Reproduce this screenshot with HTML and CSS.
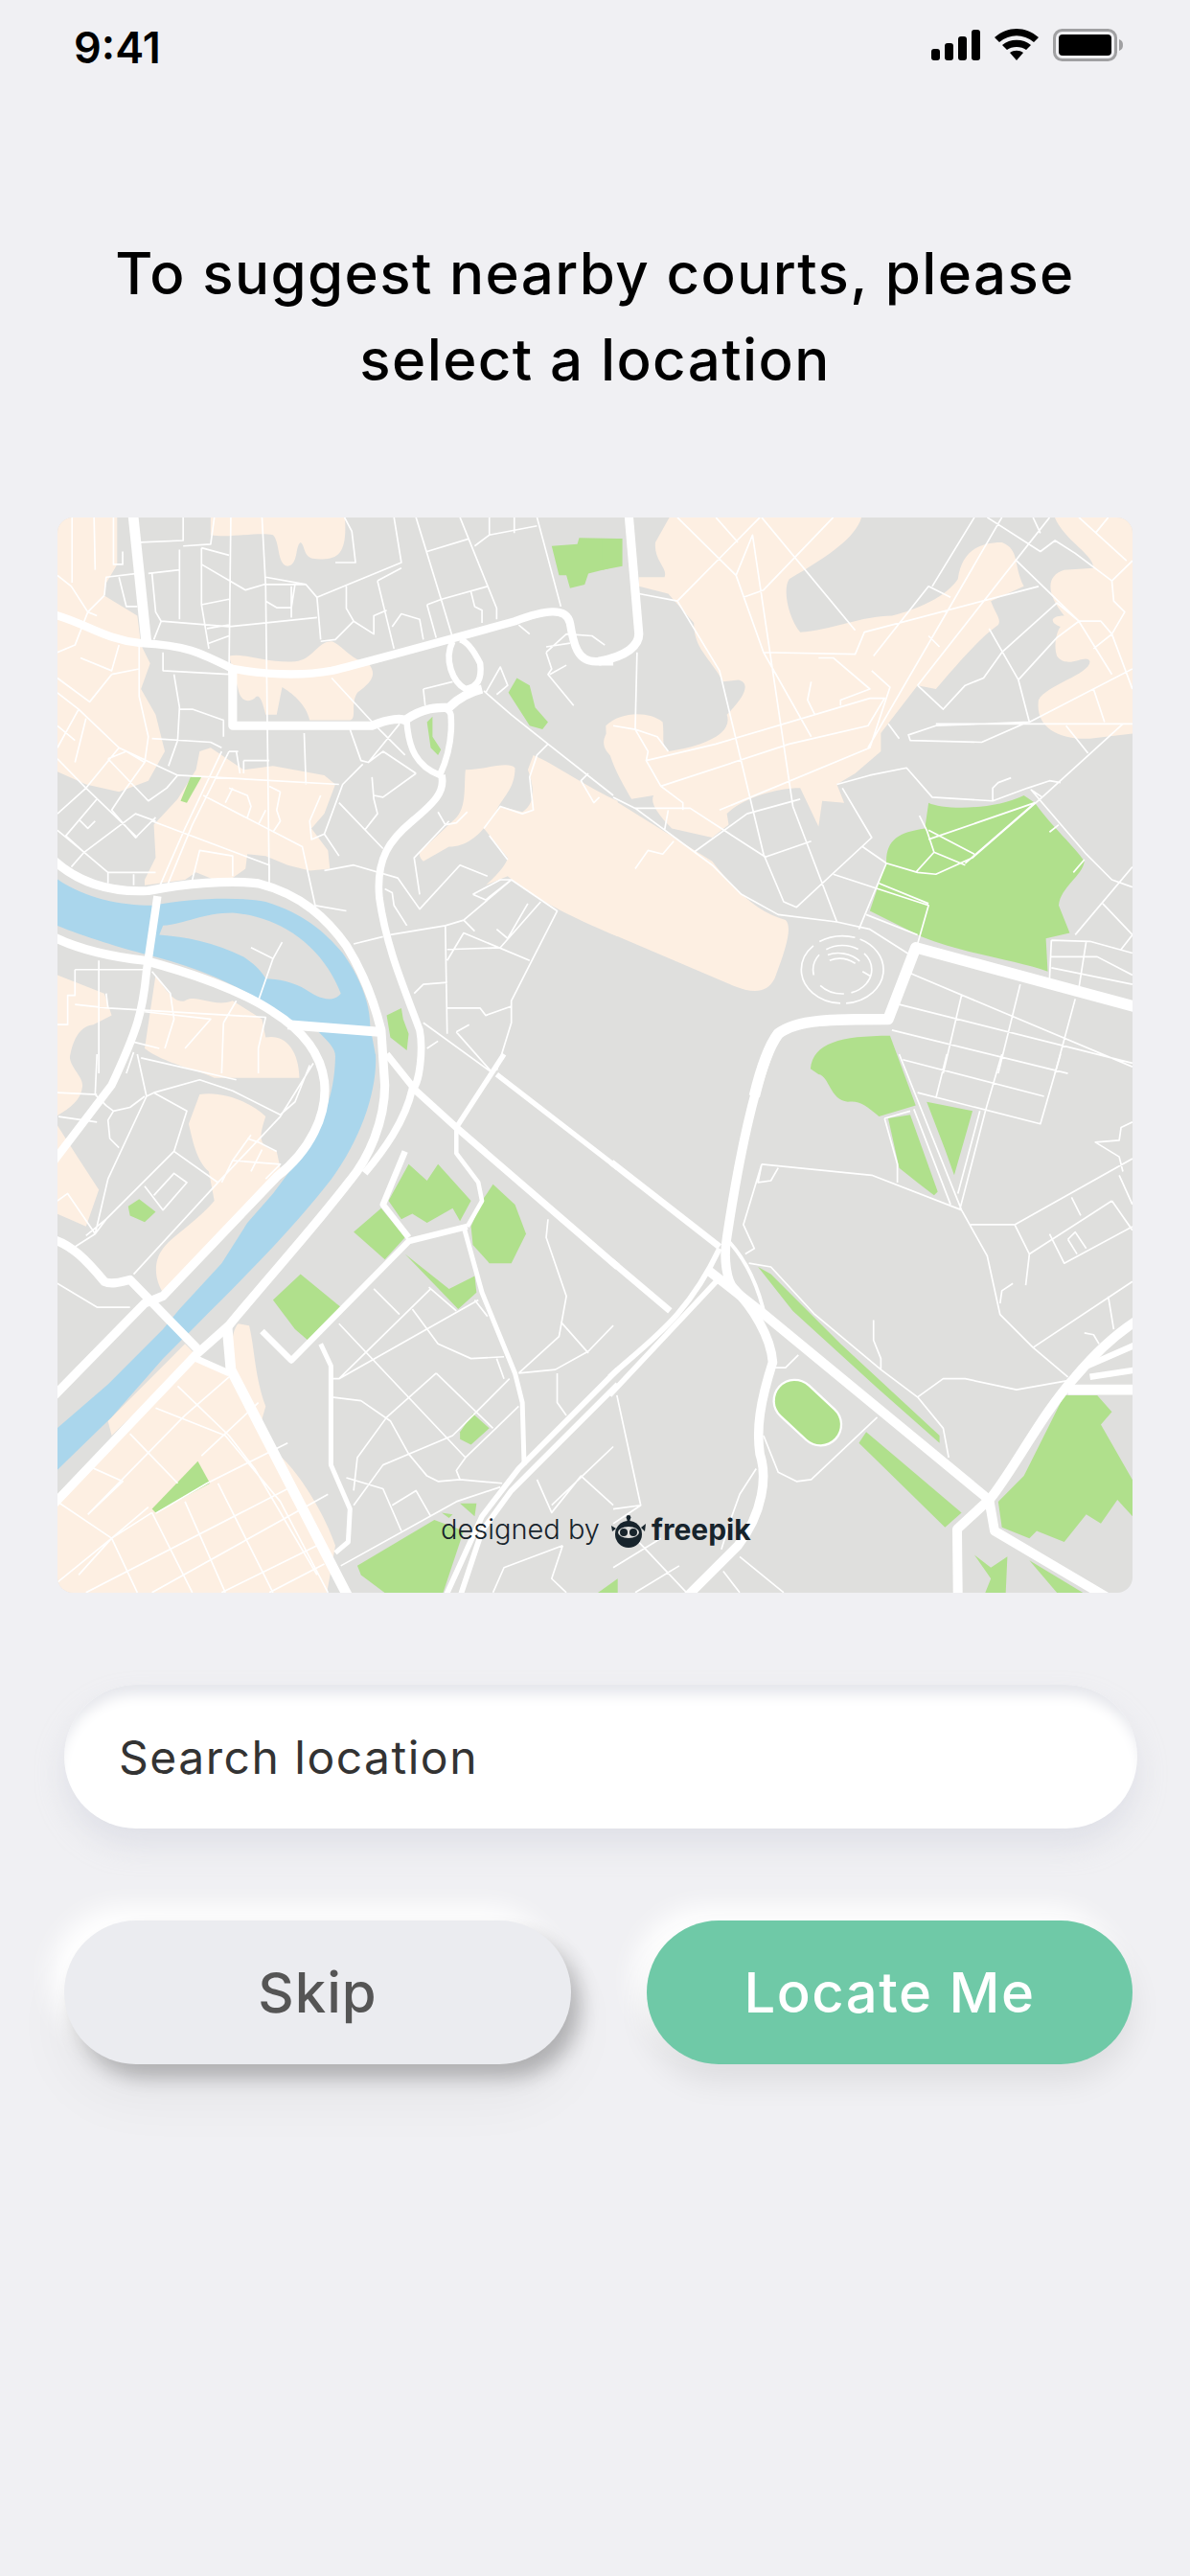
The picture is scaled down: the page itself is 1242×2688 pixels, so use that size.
FILE: index.html
```html
<!DOCTYPE html>
<html lang="en">
<head>
    <meta charset="UTF-8">
    <meta name="viewport" content="width=device-width, initial-scale=1.0">
    <title>Select Location</title>
    <link rel="stylesheet" href="styles.css">
</head>
<body>

    <div class="status-bar">
        <span class="status-time">9:41</span>
        <svg class="status-icons" viewBox="970 28 204 38" width="204" height="38">
            <rect x="972" y="51" width="9" height="12" rx="3"/>
            <rect x="986" y="45" width="9" height="18" rx="3"/>
            <rect x="1000" y="38" width="9" height="25" rx="3"/>
            <rect x="1014" y="31" width="9" height="32" rx="3"/>
            <path d="M1038 39C1052 27 1070 27 1084 39L1079 44C1068 35 1054 35 1043 44Z"/>
            <path d="M1046 47C1054 40 1068 40 1076 47L1071 52C1066 48 1056 48 1051 52Z"/>
            <path d="M1054 55C1058 52 1064 52 1068 55L1061 63Z"/>
            <rect class="battery-case" x="1100.5" y="31.5" width="64" height="31" rx="8"/>
            <rect x="1105" y="36" width="55" height="22" rx="4"/>
            <path class="battery-cap" d="M1168 41C1171 42 1172 44 1172 47C1172 50 1171 52 1168 53Z"/>
        </svg>
    </div>

    <h1 class="heading">To suggest nearby courts, please<br>select a location</h1>

    <div class="map">
        <svg class="map-art" viewBox="60 540 1122 1122" width="1122" height="1122">
            <rect x="60" y="540" width="1122" height="1122" fill="#dfdfdd"/>

            <!-- built up areas -->
            <g class="land">
                <path transform="translate(40 520) scale(.3827)" d="M40 40H215V180L180 240V265L270 320 280 400 305 450 280 520 320 590 345 690 300 770 220 800 130 780 40 740Z"/>
                <path transform="translate(40 520) scale(.3827)" d="M470 40V100C520 110 600 90 640 100 660 120 650 180 680 185 710 180 700 130 715 120 730 130 720 165 760 165 820 170 845 150 835 40Z"/>
                <path transform="translate(40 520) scale(.3827)" d="M520 430C560 420 620 450 700 445 750 440 760 390 800 390 830 400 850 440 900 450 925 480 910 500 870 530 850 560 870 600 850 605H740C730 560 690 530 665 515L650 590H620C610 545 600 530 590 545 570 560 550 550 545 520Z"/>
                <path transform="translate(40 520) scale(.3827)" d="M440 690 470 680 500 700 560 740 640 730 780 755 810 780 780 860 745 900 790 960 795 1010 740 1015 680 1000 620 975 570 970 565 1010 530 1035 480 1040 430 1020 400 1040 290 1055V1040L320 980 315 890 380 820 430 740Z"/>
                <path transform="translate(40 520) scale(.3827)" d="M40 1295 180 1350 200 1410 150 1435C110 1440 85 1480 80 1580H40Z"/>
                <path transform="translate(40 520) scale(.3827)" d="M320 1300C340 1330 370 1380 400 1370 430 1350 480 1390 530 1370L610 1420 620 1470C670 1460 710 1500 712 1580H480C440 1560 340 1540 290 1500Z"/>
                <path transform="translate(40 520) scale(.3827)" d="M1350 700C1400 720 1500 790 1580 825V1195C1450 1140 1350 1090 1280 1030L1220 1055C1260 1020 1280 990 1280 980L1215 900 1260 840 1320 855C1360 830 1350 780 1335 740Z"/>
                <path transform="translate(40 520) scale(.3827)" d="M1165 740C1220 740 1280 715 1300 735 1300 790 1270 810 1250 850 1220 900 1180 950 1120 950L1050 990C1040 980 1035 970 1045 960L1130 880C1170 850 1160 790 1165 740Z"/>
                <path transform="translate(40 520) scale(.3827)" d="M1580 615C1550 630 1530 660 1550 690L1580 725Z"/>
                <path transform="translate(640 520) scale(.3827)" d="M115 120 160 40H680C670 100 600 150 480 220 460 250 480 330 510 365 590 360 680 320 760 320 800 310 900 280 940 220 950 150 990 120 1060 120 1110 140 1090 180 1120 240L1030 280C1040 310 1060 330 1050 345 1000 380 940 450 880 520L830 510 730 640V690L660 750 610 780 630 830 570 825 560 895 510 790C440 790 350 820 310 860L315 890 270 925 160 900C120 860 100 830 110 810L50 820C10 750-20 700-20 620 20 580 100 580 135 610 140 650 130 680 150 690 220 680 330 650 310 590 370 530 370 500 340 495L300 500C260 430 220 410 220 340L150 260 70 240V215H140C150 190 110 170 115 120Z"/>
                <path transform="translate(640 520) scale(.3827)" d="M1200 40H1430V640L1300 655C1210 660 1150 620 1160 550 1180 510 1300 480 1300 445 1290 420 1240 470 1210 430 1200 400 1210 360 1220 350 1190 340 1190 320 1230 320 1180 260 1180 210 1230 195L1310 190C1310 150 1220 110 1200 40Z"/>
                <path transform="translate(640 520) scale(.3827)" d="M-10 815 270 990C340 1080 400 1130 470 1150 490 1170 470 1230 440 1310 420 1350 380 1350 330 1330L-10 1185Z"/>
                <path transform="translate(40 1100) scale(.3827)" d="M40 0H85C85 40 125 60 120 90 115 130 80 150 40 175Z"/>
                <path transform="translate(40 1100) scale(.3827)" d="M40 175 100 270 165 370 130 470 40 430Z"/>
                <path transform="translate(40 1100) scale(.3827)" d="M440 110C500 100 580 130 620 170 600 230 600 250 650 265L660 310 610 370 480 530 340 650C320 620 310 570 340 530 360 500 440 450 480 400L465 320C430 290 420 230 410 190Z"/>
                <path transform="translate(40 1100) scale(.3827)" d="M40 1235 430 820 520 870 510 850C530 850 520 760 545 735L575 740C590 800 590 880 620 960L600 1030 640 1080C700 1120 780 1250 810 1340L785 1480H40Z"/>
                <path transform="translate(40 1100) scale(.3827)" d="M190 1000 400 790 430 820 200 1040Z"/>
            </g>

            <!-- river -->
            <g class="water">
                <path transform="translate(40 520) scale(.3827)" fill-rule="evenodd" d="M40 1030C120 1090 220 1110 310 1110 420 1090 540 1085 620 1100 720 1130 780 1180 830 1240 880 1310 905 1380 905 1440L920 1520H810C810 1500 790 1480 760 1450L680 1420C620 1370 480 1290 320 1250 220 1225 110 1190 40 1160ZM340 1165C400 1160 450 1130 530 1130 650 1140 770 1210 825 1350 800 1380 760 1360 730 1340 700 1320 650 1310 620 1310 610 1290 590 1270 560 1250 480 1210 400 1195 330 1190Z"/>
                <path transform="translate(40 1100) scale(.3827)" d="M920 0C925 100 880 230 800 340 700 470 560 610 430 740L340 830 200 990 40 1145V1030L190 900 340 750 385 695 500 570 570 460 640 380 700 300C790 190 810 80 810 0Z"/>
            </g>

            <!-- parks -->
            <g class="park">
                <path transform="translate(40 520) scale(.3827)" d="M1400 130 1470 125 1475 108 1580 110V185L1500 205 1490 235 1450 245 1440 210H1420Z"/>
                <path transform="translate(40 520) scale(.3827)" d="M1282 530 1305 490 1340 510 1355 570 1390 610 1375 630 1340 620Z"/>
                <path transform="translate(40 520) scale(.3827)" d="M1060 610 1075 595V650L1098 685 1090 700 1070 680Z"/>
                <path transform="translate(40 520) scale(.3827)" d="M388 825 415 760H445L405 830Z"/>
                <path transform="translate(40 520) scale(.3827)" d="M950 1410 990 1390 995 1420 1010 1460 1005 1505 960 1470Z"/>
                <path transform="translate(640 520) scale(.3827)" d="M860 830C900 850 1040 850 1120 810L1150 830C1200 900 1260 950 1285 990 1280 1030 1220 1060 1215 1110L1245 1185 1180 1200 1185 1290C1100 1260 950 1240 840 1195L700 1125 745 990C745 930 780 910 850 900Z"/>
                <path transform="translate(640 520) scale(.3827)" d="M-30 110H25V185L-30 195Z"/>
                <path transform="translate(640 1100) scale(.3827)" d="M538 40C545-30 620-50 755-50L825 140 725 170C690 140 670 125 640 130 590 125 590 60 560 55Z"/>
                <path transform="translate(640 1100) scale(.3827)" d="M750 175 810 165 885 375 875 385 830 350 780 310Z"/>
                <path transform="translate(640 1100) scale(.3827)" d="M855 130 980 155 930 330 905 260Z"/>
                <path transform="translate(640 1100) scale(.3827)" d="M395 580 430 600 620 790 890 1040V1060L720 910 490 700Z"/>
                <path transform="translate(640 1100) scale(.3827)" d="M690 1030 950 1250 905 1290 670 1060Z"/>
                <path transform="translate(640 1100) scale(.3827)" d="M1230 930H1320L1360 975 1330 1010 1430 1185V1275L1375 1215 1330 1280 1290 1255 1230 1330 1155 1300 1135 1320 1060 1290 1050 1220 1120 1150Z"/>
                <path transform="translate(640 1100) scale(.3827)" d="M985 1365 1030 1400 1075 1370 1070 1480H1010L1030 1430Z"/>
                <path transform="translate(640 1100) scale(.3827)" d="M1135 1380 1300 1480H1220Z"/>
                <path transform="translate(40 1100) scale(.3827)" d="M245 415 275 395 320 430 290 458 250 440Z"/>
                <path transform="translate(40 1100) scale(.3827)" d="M955 400 1010 300 1060 345 1090 300 1180 400 1150 455 1130 420 1060 460 1020 435 990 450Z"/>
                <path transform="translate(40 1100) scale(.3827)" d="M860 485 935 420 1000 500 945 560Z"/>
                <path transform="translate(40 1100) scale(.3827)" d="M1180 470 1210 400 1240 355 1300 410 1330 490 1290 570H1230L1185 520Z"/>
                <path transform="translate(40 1100) scale(.3827)" d="M1000 545 1120 640 1190 605 1195 650 1145 695Z"/>
                <path transform="translate(40 1100) scale(.3827)" d="M640 670 715 600 825 690 735 780 700 750Z"/>
                <path transform="translate(40 1100) scale(.3827)" d="M1150 1030 1185 980 1230 1020 1180 1065 1150 1050Z"/>
                <path transform="translate(40 1100) scale(.3827)" d="M310 1240 435 1110 468 1170 320 1250Z"/>
                <path transform="translate(40 1100) scale(.3827)" d="M870 1395 1080 1270 1160 1300 1100 1480H960L880 1420Z"/>
                <path transform="translate(40 1100) scale(.3827)" d="M1100 1250 1130 1255 1120 1265ZM1150 1225H1195L1190 1260Z"/>
                <path transform="translate(40 1100) scale(.3827)" d="M1510 1480 1580 1430V1480Z"/>
            </g>

            <!-- running track -->
            <path class="track-edge" transform="translate(640 1100) scale(.3827)" d="M495 945 565 1010"/>
            <path class="track" transform="translate(640 1100) scale(.3827)" d="M495 945 565 1010"/>

            <!-- minor streets -->
            <g class="street">
                <path transform="translate(40 520) scale(.3827)" d="M92 52V230M152 52 155 195M205 52V180H230V145M180 265 185 215 270 205M220 215 240 295H270M278 120 395 115V52M395 130 470 125 480 52M385 140V330M300 205 385 195M310 205 320 310 335 335 315 385M335 335 520 350 760 325M445 135 520 155M445 180 565 250 615 235H730L760 270 770 385M445 135V290L465 410M445 290 520 275M460 355 520 345M465 395 520 375M525 52 520 480M610 52 620 240 630 1070M620 280 650 298H690L700 235M690 240V325M620 215 730 235M760 270 990 175 970 52M840 240V300L860 335 915 370V320L950 305M860 335 810 385 770 390M810 175H865L855 90 835 52M925 225 990 190M925 225 970 410M1030 52 1100 280 1130 380M1060 145 1175 110M1150 52 1250 300V330M1190 130 1230 100 1360 75M1230 52V100M1298 52V95M1360 52 1425 295M1060 290 1100 275 1225 240M1060 290 1085 380M1180 255 1190 295 1210 305V340M965 350 990 315 1040 330 1050 385"/>
                <path transform="translate(40 520) scale(.3827)" d="M340 420V470L520 480M370 480 385 570 380 660 355 730M385 575H420L505 605V650M310 655 470 665 500 680M275 400V540L300 650 290 720 240 790 200 850 265 925 320 870M52 210 90 240 135 310 160 320M180 265 135 310 100 400 52 420M115 435 200 470 220 400M200 480 275 465M52 490 140 555 200 480M52 530 110 575 220 680 380 755 820 780M110 575 52 680M130 600 100 720M52 620 100 660M220 680 130 790 52 860M52 710 130 790 270 925M190 710 300 825 350 790 380 755M190 710 240 690 290 720M160 820 75 920 125 965 265 860 320 880M52 905 125 965 190 1020V1050M125 965 90 1005M110 875 135 900 155 880M190 1020H320M260 1025V1055M330 1060 400 900 500 690M350 1060 420 890 520 690M310 880 470 940 630 1000V1040M450 810 720 950 755 1110 840 1125M780 1015 860 1000 980 1035 1040 1120 1150 1000 1225 1030M1040 1080 1025 980 1120 880M420 1040 440 960 530 975V1030M560 715H630M560 715V750M520 690H545M540 690 550 750M725 640 730 780M850 630 880 715 900 720 940 690 1030 750M885 725 830 780 780 915 820 975M780 915 745 930 740 880 770 810M910 760 915 820 925 860 890 905M915 810 940 815 1030 750M820 830 940 955M800 490 920 620 1000 700M985 615 900 720M520 790 570 810 580 840 570 870M660 800 650 850 660 880 640 910M630 785 660 800M510 830 530 790M620 850 600 890"/>
                <path transform="translate(40 520) scale(.3827)" d="M860 1215 940 1195M960 1190 1110 1165 1160 1150 1290 1040 1415 1125 1290 1370V1430L1250 1560M1160 1150 1190 1180M1110 1165 1115 1460M1115 1260 1160 1185 1340 1260M1115 1230 1260 1225 1370 1100M1250 1175 1280 1200 1335 1105M1025 1350 1050 1325 1115 1320M1115 1390H1205L1220 1410 1290 1385M1140 1455 1175 1435M1140 1455 1240 1568M1050 1430 1240 1568M1090 1480 1060 1500M945 1065 965 1075 970 1110 1005 1165M1230 920 1280 985M1185 1080 1260 1040H1290M1185 1080 1220 1095 1290 1040M580 1225 640 1255 600 1370M640 1255 665 1210M100 1285H285M100 1285V1355H80V1435H52M165 1260V1568M100 1380 190 1390 620 1415 600 1500V1568M185 1350 190 1390M310 1290 360 1350 370 1420 345 1500M290 1400 470 1420 400 1500M505 1430 500 1568M540 1370 505 1430M330 1500 250 1480M260 1510 240 1568M1310 345 1340 370M1385 420 1440 370 1510 375 1545 400M1385 420 1400 465 1390 480 1460 565M1395 480 1440 455M1385 405 1450 395M1220 530 1260 460 1280 510 1250 535M1050 520 1130 500M1050 520 1055 565M1215 525 1290 590 1390 670 1568 810M1390 670 1360 700 1340 760 1350 850 1320 860 1260 840 1215 900M1500 750 1480 770 1515 830 1530 815M1090 855 1110 890 1140 885 1170 855"/>
                <path transform="translate(640 520) scale(.3827)" d="M0 620 60 630 120 650 150 690M60 630 65 420M60 630 95 690 90 715 130 785 190 830V850M90 715 280 670 700 545H740L695 620 480 670 130 785M70 260 175 280 400 52M175 280 290 470 410 970 465 1100 500 1115 705 925 625 790M175 52 335 210 410 420 540 650M280 52 340 120M335 210 380 100 490 840 610 1155M355 270 410 250 600 52M405 52 660 360M410 420 660 425 685 365 1160 240M560 435H600L700 520 620 550V565M540 500 530 550 550 590M705 470 755 515 700 680 290 850M710 430 860 240 920 270M860 375 890 405M870 240 985 52M695 680 1060 52M830 510 1190 52M830 510 900 575 960 510 1010 490 1060 420 1210 285 1270 335H1330L1360 370 1416 520M1025 355 1105 495 1135 610M1105 495 1210 380 1270 335 1360 480M1416 465 1135 610 880 620 805 645 810 660 1005 665 1130 610M1416 615H880M750 615 780 655M1310 410 1360 370 1395 310 1365 280 1360 225 1260 150 1205 115 1165 145 1020 52M1360 225 1416 170M1270 52 1400 170M1145 52 1165 95M1315 95 1350 52M1100 170 1270 335M1310 520 1340 610M1235 620 1295 695"/>
                <path transform="translate(640 520) scale(.3827)" d="M1390 615 1170 815 1140 795 1290 970 1360 1040 1416 1060M1170 815 980 980 880 1025 830 1020 745 995 680 950M1416 1005 1260 1190M1335 1105 1416 1190 1385 1230M1195 1205 1190 1310M1195 1205 1300 1208 1416 1240M1195 1250H1320L1416 1300M1195 1280 1416 1325M1290 1208 1270 1335M610 780 700 755 800 735 870 815 1035 825 1130 790 1190 770 1220 775M1035 825V790L1050 775 1085 762M0 815 60 845H210L310 910 415 978 540 935M60 845 270 1000 350 1080 450 1135 610 1155 700 1175 810 1245M150 850 140 905M220 965 365 860 510 820M60 1010 95 960 135 970 165 935M600 1025 860 1110 830 1215M725 1050 860 1105M670 1175 745 995M690 1135 830 1190M860 905 985 970M875 965 960 1000M825 1020 875 965 855 905 835 865M860 930 1150 830 960 995M1190 910 1215 890M1255 1020 1285 985M810 1295 1416 1550M780 1380 1416 1540M760 1450 1240 1568M950 1355 900 1568M1110 1325 1050 1568M1260 1365 1205 1568"/>
                <path transform="translate(640 1100) scale(.3827)" d="M790 15 1175 115M830 105 1165 190 1220 0M910 0 880 120M1060 0 1015 155 945 425M1000 155 940 380M780 0 950 425M820 150 920 410M740 175 810 155M740 175 775 300V350M405 300 705 330 950 425M405 300 355 465 385 530 360 545M405 300 395 350 430 345 450 310M950 425 1020 550 1055 710 1145 800 1240 880M975 465H1095L1416 285M1095 465 1135 545 1125 630M1135 545 1360 400M1190 490 1230 570 1416 470M1360 400 1416 480M1250 390 1275 440M1240 505 1260 485 1290 530M1240 505 1265 545M1380 330 1416 410M1416 185 1385 200 1380 235 1315 240 1380 280 1390 320M1145 800 1416 620M1350 660 1365 750M1285 760 1310 765 1325 790M1055 680 1060 645 1090 625M830 935 900 885H960L1100 915 1240 890M370 570 430 580 550 710 730 860 830 935 900 1020 915 1100M710 725V780L730 830V860M505 820 470 855H440M410 1040 450 1140 500 1165 540 1160 720 990M390 1130 345 1200 320 1270 295 1350M10 930 75 1230 30 1260 0 1280M75 1230 0 1240M60 1320 200 1468M0 1400 130 1320M60 1468 180 1395M300 1410 345 1468M345 1370 465 1468"/>
                <path transform="translate(40 1100) scale(.3827)" d="M52 105 160 110M55 170 160 185M160 0 155 110 185 140 205 155 190 180 195 230 220 255M205 155 250 145 290 115M270 0 295 115 190 340 155 490 100 525M295 115 315 105 405 155 370 265 490 350 660 170 750 25M370 265 185 450 155 490 80 380 52 400M185 450 130 495M290 360 340 425 405 350 370 325 315 385M315 105 440 70 530 100 660 165 700 130 740 30M280 10 540 70M530 290 660 300 620 340M580 220 530 290 500 350M610 260 580 320M570 230 600 240 650 265M52 625 160 690H250M260 600 490 350"/>
                <path transform="translate(40 1100) scale(.3827)" d="M135 1255 400 985 520 880M200 1320 300 1235M445 1095 600 950M110 1420 200 1320M130 1120 230 1165 135 1255M250 1035 380 1170M320 965 510 1040 660 1220 790 1468M130 1468 690 1180M310 1468 790 1200M320 1252 460 1170 680 1060M500 1468 760 1340M630 1468 780 1390M52 1440 200 1320 310 1250M52 1220 200 1320 270 1468M310 1250 420 1468M400 1220 510 1468M490 1170 640 1468M590 1130 760 1420M380 905 520 1040 590 1130"/>
                <path transform="translate(40 1100) scale(.3827)" d="M820 735 1165 1100M915 640 985 710M1065 635 1140 700M1085 870 1240 1020M800 885H820L1070 640M820 885 1200 670M1190 670 1225 715M1020 695 1090 790 1180 830 1270 825M1250 830 1270 885M800 935 880 945 960 1000 1010 1090 1060 1150 1090 1165 1150 1160 1265 1170M860 1190 870 1100 950 990 1085 870M860 1230 940 1120 1130 1040 1285 885M1165 1100 1140 1135 1150 1160M1165 1100 1310 960M840 1155 940 1185 990 1300M965 1230 1030 1190 1070 1260M825 1395 1140 1220 1260 1180M1310 870 1410 860 1500 810 1568 740M1390 450 1385 500 1440 660 1420 770 1310 870M1425 730 1500 815M1415 870V950L1440 985M1360 1160 1400 1250 1480 1150 1568 1230M1400 1230 1568 1070M1430 1340 1270 1400 1240 1468M1430 1340 1400 1430 1440 1468"/>
                <g class="rings" transform="translate(640 520) scale(.3827)">
                    <ellipse cx="625" cy="1285" rx="112" ry="92" stroke-dasharray="150 16 230 20 100 14"/>
                    <ellipse cx="625" cy="1285" rx="80" ry="66" stroke-dasharray="90 20 70 34 60 24"/>
                    <path d="M585 1245C610 1235 650 1240 672 1262M590 1260C615 1250 640 1255 660 1268M680 1290 700 1302"/>
                </g>
            </g>

            <!-- main roads -->
            <g class="road">
                <path transform="translate(40 520) scale(.3827)" stroke-width="22" d="M40 316C130 340 180 385 280 395 400 400 440 420 530 465 620 480 720 485 800 470 900 445 1100 390 1300 335 1380 305 1440 295 1450 340 1460 400 1470 445 1520 445H1568"/>
                <path transform="translate(640 520) scale(.3827)" stroke-width="24" d="M-40 445C40 430 70 400 70 370L42 40"/>
                <path transform="translate(40 520) scale(.3827)" stroke-width="28" d="M258 40 295 395"/>
                <path transform="translate(40 520) scale(.3827)" stroke-width="24" d="M530 470V620H910C960 600 990 600 1000 605 1050 570 1090 570 1120 570 1140 550 1170 530 1210 520"/>
                <path transform="translate(40 520) scale(.3827)" stroke-width="17" d="M1130 390C1105 440 1130 500 1165 520 1200 515 1210 490 1205 450 1190 420 1170 390 1150 385"/>
                <path transform="translate(40 520) scale(.3827)" stroke-width="17" d="M1005 610C1010 680 1030 730 1095 755 1120 700 1130 650 1125 590 1120 570 1090 565 1060 575"/>
                <path transform="translate(40 520) scale(.3827)" stroke-width="20" d="M1100 755C1110 800 1080 830 1020 880 960 930 920 980 930 1090 950 1230 1000 1340 1040 1450 1050 1500 1040 1600 1020 1610 1000 1700 940 1780 890 1840"/>
                <path transform="translate(40 520) scale(.3827)" stroke-width="24" d="M40 985C110 1050 200 1075 300 1070 400 1050 520 1040 600 1050 720 1080 790 1150 840 1220 890 1300 920 1390 935 1450L945 1600C945 1700 900 1800 850 1860 750 1990 640 2110 520 2255L430 2335 30 2755"/>
                <path transform="translate(40 520) scale(.3827)" stroke-width="24" d="M40 1195C110 1230 200 1250 290 1260 400 1290 550 1340 640 1400 720 1450 770 1510 780 1590 790 1680 740 1780 650 1850L340 2175 290 2195 40 2450"/>
                <path transform="translate(40 520) scale(.3827)" stroke-width="22" d="M325 1085 295 1290C285 1400 270 1450 200 1600L40 1810"/>
                <path transform="translate(40 520) scale(.3827)" stroke-width="26" d="M680 1435 930 1455"/>
                <path transform="translate(40 1100) scale(.3827)" stroke-width="19" d="M950 0 1030 100 1140 200 1580 580"/>
                <path transform="translate(40 1100) scale(.3827)" stroke-width="14" d="M1140 200 1270 0M1250 55 1580 310"/>
                <path transform="translate(40 1100) scale(.3827)" stroke-width="24" d="M40 505C90 520 130 560 180 620 200 630 230 620 250 615L440 810"/>
                <path transform="translate(40 1100) scale(.3827)" stroke-width="28" d="M515 745 525 860 850 1490"/>
                <path transform="translate(40 1100) scale(.3827)" stroke-width="18" d="M430 830 520 870"/>
                <path transform="translate(40 1100) scale(.3827)" stroke-width="17" d="M610 755 690 835 1010 510 1170 470M1000 265 940 410 1010 500"/>
                <path transform="translate(40 1100) scale(.3827)" stroke-width="13" d="M770 790 798 850V1120L850 1240 845 1330 810 1360M1160 470 1210 650 1300 870 1320 950 1325 1120"/>
                <path transform="translate(40 1100) scale(.3827)" stroke-width="12" d="M1140 200V270L1200 350 1210 400 1170 470"/>
                <path transform="translate(40 1100) scale(.3827)" stroke-width="15" d="M1580 860 1310 1130 1210 1260 1110 1480M1580 900 1290 1190 1210 1300 1150 1480"/>
                <path transform="translate(640 520) scale(.3827)" stroke-width="30" d="M1430 1388 825 1225 750 1420C600 1420 500 1420 450 1460 420 1500 400 1568 385 1630"/>
                <path transform="translate(640 1100) scale(.3827)" stroke-width="25" d="M430-20C380 100 340 300 310 500 300 560 310 620 330 640 380 690 430 770 435 840 400 950 390 1020 400 1090 420 1150 410 1250 340 1340 300 1380 260 1420 200 1480"/>
                <path transform="translate(640 1100) scale(.3827)" stroke-width="18" d="M-5 295 290 525M-5 565 155 700"/>
                <path transform="translate(640 1100) scale(.3827)" stroke-width="15" d="M-10 880C100 780 200 720 290 530M-10 930 290 610"/>
                <path transform="translate(640 1100) scale(.3827)" stroke-width="10" d="M315 510C370 570 400 650 415 720"/>
                <path transform="translate(640 1100) scale(.3827)" stroke-width="26" d="M260 590 400 700 1025 1215 1040 1300 1345 1480"/>
                <path transform="translate(640 1100) scale(.3827)" stroke-width="26" d="M940 1480 938 1295 1030 1210C1100 1120 1170 980 1260 880 1310 820 1360 770 1430 725"/>
                <path transform="translate(640 1100) scale(.3827)" stroke-width="28" d="M1240 915H1430"/>
                <path transform="translate(640 1100) scale(.3827)" stroke-width="17" d="M1270 860 1430 790M1300 880 1430 860"/>
            </g>
        </svg>

        <div class="map-credit">
            <span class="credit-by">designed by</span>
            <svg class="credit-logo" viewBox="0 0 36 34" width="36" height="34">
                <circle cx="18" cy="20" r="14" fill="#17242c"/>
                <rect x="16.5" y="1" width="3" height="8" fill="#17242c"/>
                <circle cx="18" cy="2.5" r="2.4" fill="#17242c"/>
                <ellipse cx="18" cy="18" rx="11" ry="6" fill="#dfdfdd"/>
                <circle cx="13" cy="18" r="4" fill="#17242c"/>
                <circle cx="23" cy="18" r="4" fill="#17242c"/>
                <path d="M0 11 5 14 1 17ZM36 9 31 13 35 17Z" fill="#17242c"/>
            </svg>
            <span class="credit-name">freepik</span>
        </div>
    </div>

    <input class="search-input" type="text" placeholder="Search location">

    <div class="actions">
        <button class="btn btn-skip" type="button">Skip</button>
        <button class="btn btn-locate" type="button">Locate Me</button>
    </div>

</body>
</html>
```

FILE: styles.css
```css
body {
    margin: 0;
    width: 1242px;
    height: 2688px;
    overflow: hidden;
    background-color: #f0f0f3;
    font-family: Inter, "Noto Sans", sans-serif;
}

.status-bar {
    display: flex;
    justify-content: space-between;
    align-items: flex-start;
    height: 88px;
    padding: 28px 68px 0 77px;
    box-sizing: border-box;
}

.status-time {
    font-size: 45px;
    line-height: 44px;
    font-weight: 600;
    color: #000;
}

.status-icons {
    display: block;
}

.battery-case {
    fill: none;
    stroke: #a0a0a2;
    stroke-width: 3;
}

.battery-cap {
    fill: #a0a0a2;
}

.heading {
    margin: 152px 0 120px;
    font-size: 60px;
    line-height: 90px;
    font-weight: 500;
    letter-spacing: 1.4px;
    text-align: center;
    color: #000;
}

.map {
    position: relative;
    width: 1122px;
    height: 1122px;
    margin-left: 60px;
    border-radius: 16px;
    overflow: hidden;
}

.map-art {
    display: block;
}

.land {
    fill: #fdefe2;
}

.water {
    fill: #aad6ec;
}

.park {
    fill: #b0e08c;
}

.track-edge,
.track {
    fill: none;
    stroke-linecap: round;
}

.track-edge {
    stroke: #fff;
    stroke-width: 120;
}

.track {
    stroke: #b0e08c;
    stroke-width: 108;
}

.street {
    fill: none;
    stroke: #fff;
    stroke-width: 4.4;
    stroke-linejoin: round;
}

.rings {
    fill: none;
}

.road {
    fill: none;
    stroke: #fff;
    stroke-linejoin: round;
}

.map-credit {
    position: absolute;
    left: 400px;
    top: 1035px;
    display: flex;
    align-items: flex-end;
    height: 40px;
    color: #17242c;
}

.credit-by {
    font-size: 29px;
    line-height: 38px;
    font-weight: 300;
}

.credit-logo {
    margin: 0 6px 0 12px;
}

.credit-name {
    font-size: 30px;
    line-height: 38px;
    font-weight: 700;
}

.search-input {
    display: block;
    width: 1120px;
    height: 150px;
    margin: 96px 0 0 67px;
    padding: 0 57px;
    box-sizing: border-box;
    border: none;
    border-radius: 75px;
    outline: none;
    background-color: #fff;
    font-family: inherit;
    font-size: 48px;
    letter-spacing: 1.5px;
    color: #333;
    box-shadow: inset 0 16px 14px -6px #e6e7ec, 0 18px 30px rgba(196, 199, 212, 0.35);
}

.search-input::placeholder {
    color: #333;
    opacity: 1;
}

.actions {
    display: flex;
    gap: 79px;
    margin: 96px 0 0 67px;
}

.btn {
    height: 150px;
    border: none;
    border-radius: 75px;
    font-family: inherit;
    font-size: 58px;
    font-weight: 500;
}

.btn-skip {
    width: 529px;
    background-color: #ebecf0;
    color: #555;
    letter-spacing: 1px;
    box-shadow: 10px 14px 20px rgba(0, 0, 0, 0.24), -14px -14px 26px #fff, 0 34px 60px rgba(0, 0, 0, 0.05);
}

.btn-locate {
    width: 507px;
    background-color: #6fc9a7;
    color: #fff;
    letter-spacing: 1.5px;
    box-shadow: 0 18px 32px rgba(0, 0, 0, 0.08), -14px -14px 26px #fff;
}
```
